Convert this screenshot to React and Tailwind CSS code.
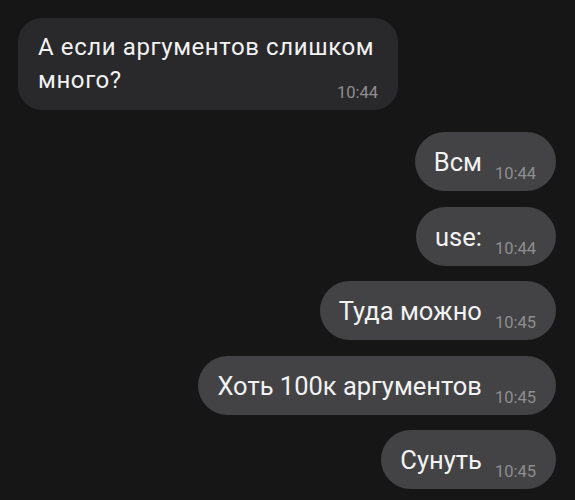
import React from "react";

const outgoing = [
  { text: "Всм", time: "10:44" },
  { text: "use:", time: "10:44" },
  { text: "Туда можно", time: "10:45" },
  { text: "Хоть 100к аргументов", time: "10:45" },
  { text: "Сунуть", time: "10:45" },
];

const OutBubble = ({ text, time }) => (
  <div className="flex items-start h-[59px] pt-[15px] pl-[19px] pr-5 rounded-full bg-[#434345]">
    <span className="text-[25.5px] leading-[30px] text-[#f2f2f2]">{text}</span>
    <span className="ml-[13px] mt-[17px] text-[16.5px] leading-5 text-[#8e8e90]">{time}</span>
  </div>
);

export default function App() {
  return (
    <div
      className="w-[575px] h-[500px] overflow-hidden bg-[#161616] px-[18px] pt-[18px]"
      style={{ fontFamily: "Roboto, 'Noto Sans', sans-serif" }}
    >
      <div className="w-[380px] rounded-[24px] bg-[#29292b] px-5 pt-[13px] pb-[7px] text-[#f2f2f2]">
        <p className="text-[24px] leading-[33px] tracking-[0.6px]">А если аргументов слишком</p>
        <div className="flex justify-between items-start">
          <span className="text-[24px] leading-[33px] tracking-[0.6px]">много?</span>
          <span className="mt-[19px] text-[16.5px] leading-5 text-[#8e8e90]">10:44</span>
        </div>
      </div>

      <div className="flex flex-col items-end gap-[15.5px] mt-[22px] pr-px">
        {outgoing.map((m, i) => (
          <OutBubble key={i} text={m.text} time={m.time} />
        ))}
      </div>
    </div>
  );
}
